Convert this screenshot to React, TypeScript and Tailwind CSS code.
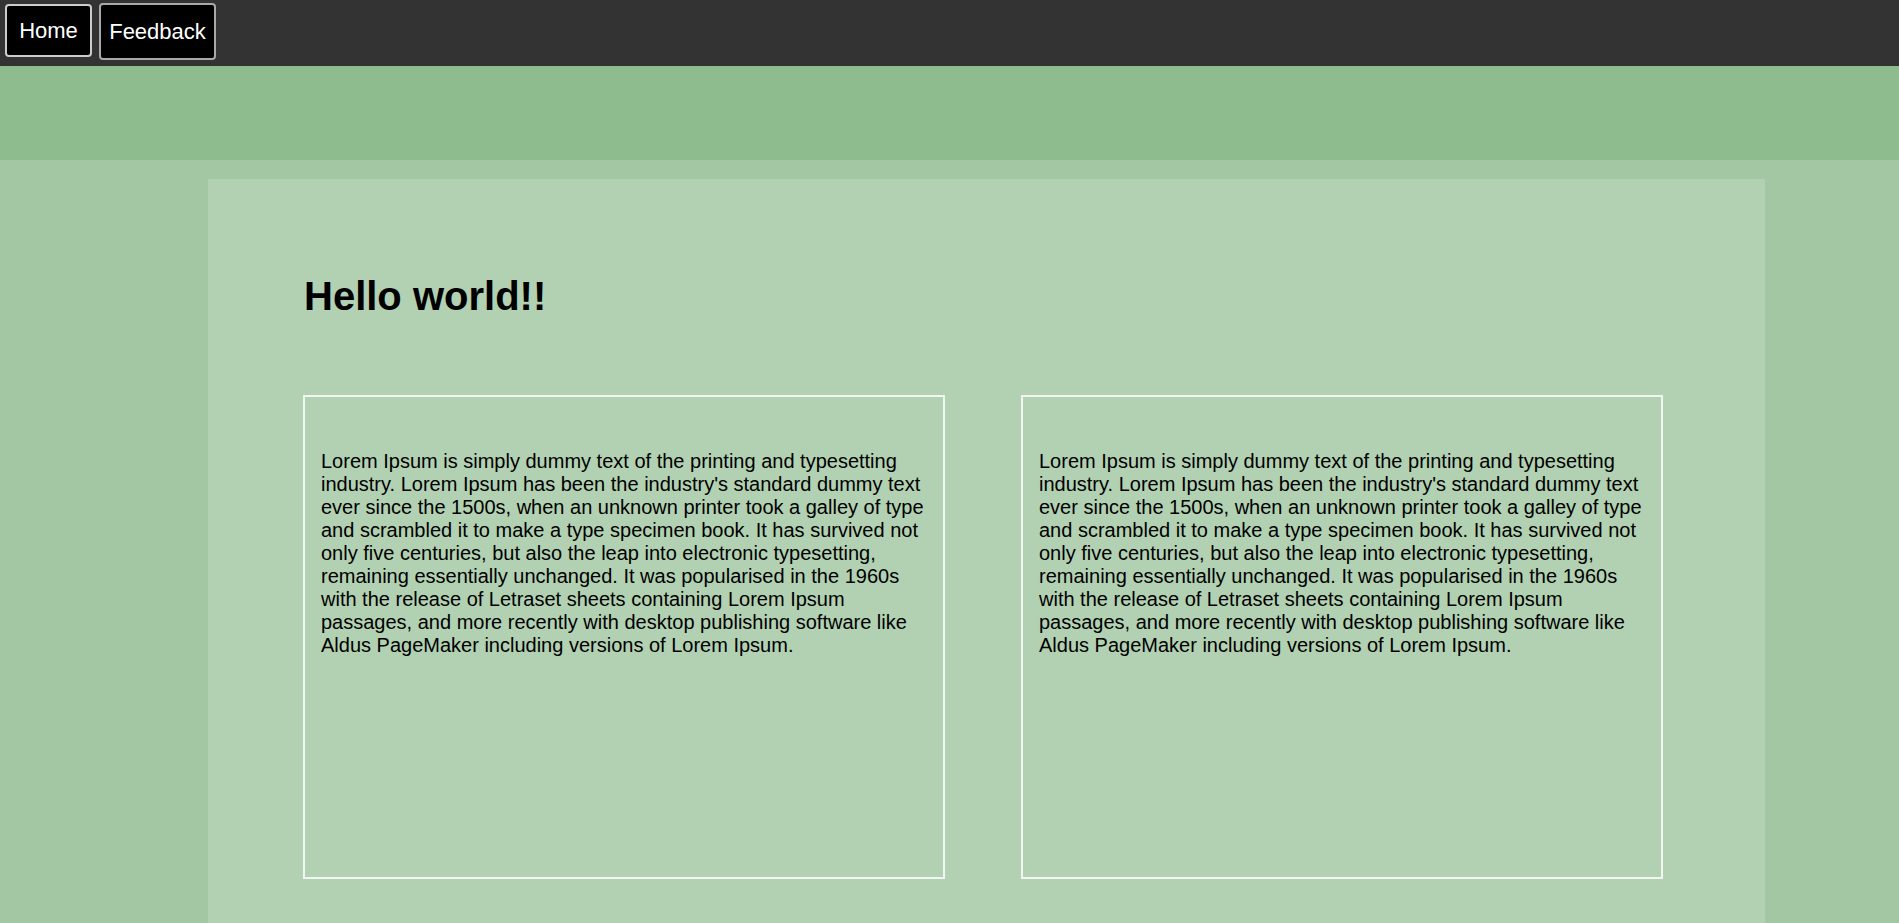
export default function App() {
  const lorem =
    "Lorem Ipsum is simply dummy text of the printing and typesetting industry. Lorem Ipsum has been the industry's standard dummy text ever since the 1500s, when an unknown printer took a galley of type and scrambled it to make a type specimen book. It has survived not only five centuries, but also the leap into electronic typesetting, remaining essentially unchanged. It was popularised in the 1960s with the release of Letraset sheets containing Lorem Ipsum passages, and more recently with desktop publishing software like Aldus PageMaker including versions of Lorem Ipsum.";
  return (
    <div className="min-h-screen bg-[#a3c7a3] font-['Liberation_Sans',Arial,sans-serif] text-black">
      <nav className="h-[66px] bg-[#333333] flex items-start">
        <button className="ml-[5px] mt-[4px] w-[87px] h-[53px] flex items-center justify-center bg-black text-white text-[22px] leading-[25px] border-2 border-[#cccccc] rounded-[4px]">
          Home
        </button>
        <button className="ml-[7px] mt-[3px] w-[117px] h-[57px] flex items-center justify-center bg-black text-white text-[22px] leading-[25px] border-2 border-[#a9a9a9] rounded-[4px]">
          Feedback
        </button>
      </nav>
      <div className="h-[94px] bg-[#8fbc8f]" />
      <div className="pt-[19px]">
        <div className="ml-[208px] w-[1557px] bg-[#b2d1b2] pl-[95px] pt-[94px] pb-[80px]">
          <h1 className="text-[40px] leading-[46px] font-bold pl-px">Hello world!!</h1>
          <div className="mt-[76px] flex gap-[76px]">
            <div className="w-[642px] h-[484px] border-2 border-[#f2f5f2] pl-[16px] pr-[14px] pt-[53px]">
              <p className="text-[20px] leading-[23px]">{lorem}</p>
            </div>
            <div className="w-[642px] h-[484px] border-2 border-[#f2f5f2] pl-[16px] pr-[14px] pt-[53px]">
              <p className="text-[20px] leading-[23px]">{lorem}</p>
            </div>
          </div>
        </div>
      </div>
    </div>
  );
}
